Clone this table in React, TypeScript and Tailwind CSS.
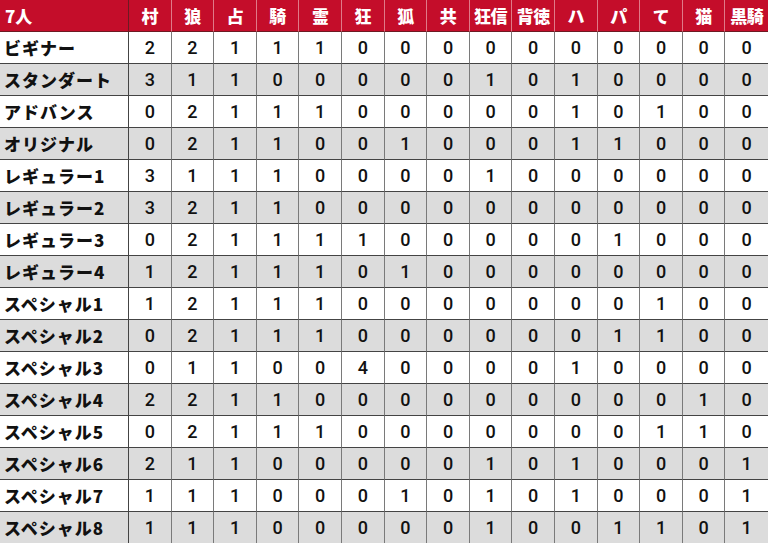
import React from "react";

const headers = ["村", "狼", "占", "騎", "霊", "狂", "狐", "共", "狂信", "背徳", "ハ", "パ", "て", "猫", "黒騎"];

const rows: [string, number[]][] = [
  ["ビギナー", [2, 2, 1, 1, 1, 0, 0, 0, 0, 0, 0, 0, 0, 0, 0]],
  ["スタンダート", [3, 1, 1, 0, 0, 0, 0, 0, 1, 0, 1, 0, 0, 0, 0]],
  ["アドバンス", [0, 2, 1, 1, 1, 0, 0, 0, 0, 0, 1, 0, 1, 0, 0]],
  ["オリジナル", [0, 2, 1, 1, 0, 0, 1, 0, 0, 0, 1, 1, 0, 0, 0]],
  ["レギュラー1", [3, 1, 1, 1, 0, 0, 0, 0, 1, 0, 0, 0, 0, 0, 0]],
  ["レギュラー2", [3, 2, 1, 1, 0, 0, 0, 0, 0, 0, 0, 0, 0, 0, 0]],
  ["レギュラー3", [0, 2, 1, 1, 1, 1, 0, 0, 0, 0, 0, 1, 0, 0, 0]],
  ["レギュラー4", [1, 2, 1, 1, 1, 0, 1, 0, 0, 0, 0, 0, 0, 0, 0]],
  ["スペシャル1", [1, 2, 1, 1, 1, 0, 0, 0, 0, 0, 0, 0, 1, 0, 0]],
  ["スペシャル2", [0, 2, 1, 1, 1, 0, 0, 0, 0, 0, 0, 1, 1, 0, 0]],
  ["スペシャル3", [0, 1, 1, 0, 0, 4, 0, 0, 0, 0, 1, 0, 0, 0, 0]],
  ["スペシャル4", [2, 2, 1, 1, 0, 0, 0, 0, 0, 0, 0, 0, 0, 1, 0]],
  ["スペシャル5", [0, 2, 1, 1, 1, 0, 0, 0, 0, 0, 0, 0, 1, 1, 0]],
  ["スペシャル6", [2, 1, 1, 0, 0, 0, 0, 0, 1, 0, 1, 0, 0, 0, 1]],
  ["スペシャル7", [1, 1, 1, 0, 0, 0, 1, 0, 1, 0, 1, 0, 0, 0, 1]],
  ["スペシャル8", [1, 1, 1, 0, 0, 0, 0, 0, 1, 0, 0, 1, 1, 0, 1]],
];

export default function App() {
  return (
    <div className="w-[768px] h-[543px] overflow-hidden bg-white font-['Noto_Sans_CJK_JP',sans-serif]">
      <div className="grid grid-cols-[129px_repeat(15,1fr)] auto-rows-[32px]">
        <div className="bg-[#c40d2a] text-white font-black text-[17px] flex items-center pl-[5px] border-r border-b border-[#6d1a22]">
          7人
        </div>
        {headers.map((h, i) => (
          <div
            key={h}
            className={`bg-[#c40d2a] text-white font-black text-[17px] flex items-center justify-center border-b border-[#6d1a22] tracking-[-0.5px] ${i < headers.length - 1 ? "border-r border-r-[#e07a88]" : ""}`}
          >
            {h}
          </div>
        ))}
        {rows.map(([label, vals], r) => {
          const bg = r % 2 === 0 ? "bg-white" : "bg-[#dcdcdc]";
          return (
            <React.Fragment key={label}>
              <div className={`${bg} font-black text-[17px] text-[#111] flex items-center pl-[4px] border-r border-b border-[#444] tracking-[1px] whitespace-nowrap`}>
                {label}
              </div>
              {vals.map((v, c) => (
                <div
                  key={c}
                  className={`${bg} font-['Roboto',sans-serif] font-medium text-[18px] text-[#111] flex items-center justify-center border-b border-b-[#444] ${c < vals.length - 1 ? "border-r border-r-[#7a7a7a]" : ""}`}
                >
                  {v}
                </div>
              ))}
            </React.Fragment>
          );
        })}
      </div>
    </div>
  );
}
